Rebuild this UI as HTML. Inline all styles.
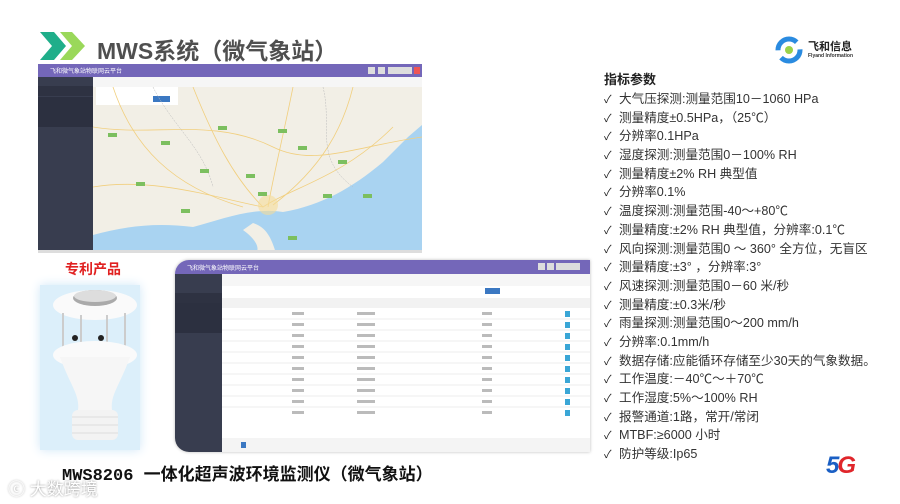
<!DOCTYPE html>
<html><head><meta charset="utf-8">
<style>
*{margin:0;padding:0;box-sizing:border-box}
body{width:900px;height:504px;background:#fff;position:relative;overflow:hidden;font-family:"Liberation Sans","Noto Sans CJK SC",sans-serif}
.abs{position:absolute}
.title{left:97px;top:32px;font-size:23px;font-weight:bold;color:#4f4f4f}
.list{left:604px;top:70px;font-size:12.6px;color:#333}
.list div{height:18.7px;line-height:18.7px;white-space:nowrap}
.list .h{font-weight:bold;color:#222;font-size:13px;height:20px;line-height:20px}
.ck{display:inline-block;width:15px;color:#222;font-size:11px}
.pill{position:absolute;width:9px;height:4px;background:#7cbf5f}
.t{position:absolute;font-size:4px;color:#666}
</style></head><body>
<svg class="abs" style="left:38px;top:30px" width="50" height="32">
<polygon points="2,2 16,2 28,16 16,30 2,30 14,16" fill="#1fae8a"/>
<polygon points="22,2 34,2 47,16 34,30 22,30 34,16" fill="#9ad85a"/>
</svg>
<div class="abs title">MWS系统（微气象站）</div>
<svg class="abs" style="left:775px;top:36px" width="30" height="28">
<circle cx="14" cy="14" r="11" fill="none" stroke="#2a8be0" stroke-width="5" stroke-dasharray="26 8"/>
<circle cx="14" cy="14" r="4" fill="#9bd24a"/>
</svg>
<div class="abs" style="left:808px;top:38px;font-size:11px;font-weight:bold;color:#222">飞和信息</div>
<div class="abs" style="left:808px;top:53px;font-size:5px;font-weight:bold;color:#333">Flyand Information</div>

<div class="abs" style="left:38px;top:64px;width:384px;height:189px;background:#f2efe6;overflow:hidden">
 <div class="abs" style="left:0;top:0;width:384px;height:13px;background:#7467b9"></div>
 <div class="abs" style="left:12px;top:2px;font-size:6px;color:#fff">飞和微气象站物联网云平台</div>
 <div class="abs" style="left:330px;top:3px;width:7px;height:7px;background:#ddd"></div>
 <div class="abs" style="left:340px;top:3px;width:7px;height:7px;background:#ddd"></div>
 <div class="abs" style="left:350px;top:3px;width:24px;height:7px;background:#ddd"></div>
 <div class="abs" style="left:376px;top:3px;width:6px;height:7px;background:#e55"></div>
 <div class="abs" style="left:0;top:13px;width:55px;height:176px;background:#383d4f"></div>
 <div class="abs" style="left:0;top:22px;width:55px;height:10px;background:#2e3242"></div>
 <div class="abs" style="left:0;top:33px;width:55px;height:30px;background:#2c3040"></div>
 <div class="abs" style="left:55px;top:13px;width:329px;height:10px;background:#f6f6f6"></div>
 <div class="abs" style="left:58px;top:23px;width:82px;height:18px;background:#fff"></div>
 <div class="abs" style="left:115px;top:32px;width:17px;height:6px;background:#3b78c2"></div>
 <svg class="abs" style="left:55px;top:23px" width="329" height="166">
  <path d="M0,166 L0,148 C30,140 60,135 100,140 C130,132 160,120 190,125 C230,118 260,100 290,75 L315,50 L329,38 L329,166 Z" fill="#a9d3f1"/>
  <path d="M150,143 C160,150 168,160 163,166 L183,166 C178,150 173,140 160,136Z" fill="#f2efe6"/>
  <g fill="none" stroke="#f1cf7e" stroke-width="0.8">
   <path d="M0,40 C60,50 120,30 180,60 C220,80 260,60 329,50"/>
   <path d="M20,0 C40,60 80,100 150,120"/>
   <path d="M100,0 C120,50 140,90 170,120 C200,100 250,90 300,40"/>
   <path d="M0,100 C60,90 120,110 170,120"/>
   <path d="M200,0 C190,50 180,90 175,120"/>
   <path d="M260,0 C250,40 230,80 180,118"/>
  </g>
  <g fill="none" stroke="#bbb" stroke-width="0.5" stroke-dasharray="2 1">
   <path d="M60,0 C80,40 110,60 120,100"/><path d="M230,0 C240,40 220,70 260,100"/>
  </g>
  <circle cx="175" cy="118" r="10" fill="#f5dc9a" opacity="0.6"/>
 </svg>
 <div class="pill" style="left:70px;top:69px"></div><div class="pill" style="left:123px;top:77px"></div>
 <div class="pill" style="left:162px;top:105px"></div><div class="pill" style="left:208px;top:110px"></div>
 <div class="pill" style="left:260px;top:82px"></div><div class="pill" style="left:300px;top:96px"></div>
 <div class="pill" style="left:98px;top:118px"></div><div class="pill" style="left:143px;top:145px"></div>
 <div class="pill" style="left:220px;top:128px"></div><div class="pill" style="left:240px;top:65px"></div>
 <div class="pill" style="left:325px;top:130px"></div><div class="pill" style="left:250px;top:172px"></div>
 <div class="pill" style="left:180px;top:62px"></div><div class="pill" style="left:285px;top:130px"></div>
 <div class="abs" style="left:0;top:186px;width:384px;height:3px;background:#ddd"></div>
</div>

<div class="abs" style="left:65px;top:259px;font-size:14px;font-weight:bold;color:#e02020">专利产品</div>
<div class="abs" style="left:40px;top:285px;width:100px;height:165px;background:#dceffa;box-shadow:0 0 10px #cfe6f7"></div>
<svg class="abs" style="left:40px;top:285px" width="100" height="165">
 <ellipse cx="55" cy="20" rx="42" ry="15" fill="#fafafa"/>
 <ellipse cx="55" cy="13" rx="22" ry="8" fill="#aaa"/>
 <ellipse cx="55" cy="11" rx="21" ry="6" fill="#ddd"/>
 <rect x="22" y="28" width="2" height="38" fill="#ccc"/><rect x="84" y="28" width="2" height="38" fill="#ccc"/>
 <rect x="40" y="30" width="2" height="34" fill="#ccc"/><rect x="66" y="30" width="2" height="34" fill="#ccc"/>
 <ellipse cx="55" cy="70" rx="42" ry="14" fill="#fafafa"/>
 <path d="M20,72 C30,100 40,110 38,125 L72,125 C70,110 80,100 90,72Z" fill="#f6f6f6"/>
 <rect x="32" y="125" width="46" height="30" rx="6" fill="#f3f3f3"/>
 <g stroke="#ddd"><line x1="32" y1="132" x2="78" y2="132"/><line x1="32" y1="140" x2="78" y2="140"/><line x1="32" y1="148" x2="78" y2="148"/></g>
 <circle cx="35" cy="53" r="3" fill="#222"/><circle cx="61" cy="53" r="3" fill="#222"/>
</svg>

<div class="abs" style="left:175px;top:260px;width:415px;height:192px;background:#fff;border-radius:14px 0 0 14px;overflow:hidden;box-shadow:0 0 3px #bbb">
 <div class="abs" style="left:0;top:0;width:415px;height:14px;background:#7467b9"></div>
 <div class="abs" style="left:12px;top:3px;font-size:6px;color:#fff">飞和微气象站物联网云平台</div>
 <div class="abs" style="left:363px;top:3px;width:7px;height:7px;background:#ddd"></div>
 <div class="abs" style="left:372px;top:3px;width:7px;height:7px;background:#ddd"></div>
 <div class="abs" style="left:381px;top:3px;width:24px;height:7px;background:#ddd"></div>
 <div class="abs" style="left:0;top:14px;width:47px;height:178px;background:#383d4f"></div>
 <div class="abs" style="left:0;top:33px;width:47px;height:10px;background:#2e3242"></div>
 <div class="abs" style="left:0;top:43px;width:47px;height:30px;background:#2c3040"></div>
 <div class="abs" style="left:47px;top:14px;width:368px;height:12px;background:#f6f6f6"></div>
 <div class="abs" style="left:310px;top:28px;width:15px;height:6px;background:#3b78c2"></div>
 <div class="abs" style="left:47px;top:38px;width:368px;height:10px;background:#f2f2f2"></div>
 <svg class="abs" style="left:47px;top:48px" width="368" height="112">
  <g stroke="#ececec">
   <line x1="0" y1="11" x2="368" y2="11"/><line x1="0" y1="22" x2="368" y2="22"/><line x1="0" y1="33" x2="368" y2="33"/>
   <line x1="0" y1="44" x2="368" y2="44"/><line x1="0" y1="55" x2="368" y2="55"/><line x1="0" y1="66" x2="368" y2="66"/>
   <line x1="0" y1="77" x2="368" y2="77"/><line x1="0" y1="88" x2="368" y2="88"/><line x1="0" y1="99" x2="368" y2="99"/>
  </g>
  <g fill="#bbb">
   <rect x="70" y="4" width="12" height="3"/><rect x="70" y="15" width="12" height="3"/><rect x="70" y="26" width="12" height="3"/><rect x="70" y="37" width="12" height="3"/><rect x="70" y="48" width="12" height="3"/><rect x="70" y="59" width="12" height="3"/><rect x="70" y="70" width="12" height="3"/><rect x="70" y="81" width="12" height="3"/><rect x="70" y="92" width="12" height="3"/><rect x="70" y="103" width="12" height="3"/>
   <rect x="135" y="4" width="18" height="3"/><rect x="135" y="15" width="18" height="3"/><rect x="135" y="26" width="18" height="3"/><rect x="135" y="37" width="18" height="3"/><rect x="135" y="48" width="18" height="3"/><rect x="135" y="59" width="18" height="3"/><rect x="135" y="70" width="18" height="3"/><rect x="135" y="81" width="18" height="3"/><rect x="135" y="92" width="18" height="3"/><rect x="135" y="103" width="18" height="3"/>
   <rect x="260" y="4" width="10" height="3"/><rect x="260" y="15" width="10" height="3"/><rect x="260" y="26" width="10" height="3"/><rect x="260" y="37" width="10" height="3"/><rect x="260" y="48" width="10" height="3"/><rect x="260" y="59" width="10" height="3"/><rect x="260" y="70" width="10" height="3"/><rect x="260" y="81" width="10" height="3"/><rect x="260" y="92" width="10" height="3"/><rect x="260" y="103" width="10" height="3"/>
  </g>
  <g fill="#3aa6d6">
   <rect x="343" y="3" width="5" height="6"/><rect x="343" y="14" width="5" height="6"/><rect x="343" y="25" width="5" height="6"/>
   <rect x="343" y="36" width="5" height="6"/><rect x="343" y="47" width="5" height="6"/><rect x="343" y="58" width="5" height="6"/>
   <rect x="343" y="69" width="5" height="6"/><rect x="343" y="80" width="5" height="6"/><rect x="343" y="91" width="5" height="6"/>
   <rect x="343" y="102" width="5" height="6"/>
  </g>
 </svg>
 <div class="abs" style="left:47px;top:178px;width:368px;height:14px;background:#f4f4f4"></div>
 <div class="abs" style="left:66px;top:182px;width:5px;height:6px;background:#3b78c2"></div>
</div>

<div class="abs" style="left:62px;top:460px;font-size:17px;font-weight:bold;color:#111;font-family:'Liberation Mono','Noto Sans CJK SC',monospace">MWS8206 一体化超声波环境监测仪（微气象站）</div>
<div class="abs" style="left:8px;top:475px;font-size:17px;color:#fff;text-shadow:0 0 2px #888">ⓒ 大数跨境</div>

<div class="abs list">
<div class="h">指标参数</div>
<div><span class="ck">✓</span>大气压探测:测量范围10－1060 HPa</div>
<div><span class="ck">✓</span>测量精度±0.5HPa，（25℃）</div>
<div><span class="ck">✓</span>分辨率0.1HPa</div>
<div><span class="ck">✓</span>湿度探测:测量范围0－100% RH</div>
<div><span class="ck">✓</span>测量精度±2% RH 典型值</div>
<div><span class="ck">✓</span>分辨率0.1%</div>
<div><span class="ck">✓</span>温度探测:测量范围-40～+80℃</div>
<div><span class="ck">✓</span>测量精度:±2% RH 典型值，分辨率:0.1℃</div>
<div><span class="ck">✓</span>风向探测:测量范围0 ～ 360° 全方位，无盲区</div>
<div><span class="ck">✓</span>测量精度:±3° ，分辨率:3°</div>
<div><span class="ck">✓</span>风速探测:测量范围0－60 米/秒</div>
<div><span class="ck">✓</span>测量精度:±0.3米/秒</div>
<div><span class="ck">✓</span>雨量探测:测量范围0～200 mm/h</div>
<div><span class="ck">✓</span>分辨率:0.1mm/h</div>
<div><span class="ck">✓</span>数据存储:应能循环存储至少30天的气象数据。</div>
<div><span class="ck">✓</span>工作温度:－40℃～＋70℃</div>
<div><span class="ck">✓</span>工作湿度:5%～100% RH</div>
<div><span class="ck">✓</span>报警通道:1路，常开/常闭</div>
<div><span class="ck">✓</span>MTBF:≥6000 小时</div>
<div><span class="ck">✓</span>防护等级:Ip65</div>
</div>

<div class="abs" style="left:826px;top:452px;font-size:24px;font-weight:bold;font-style:italic;letter-spacing:-2px"><span style="color:#1a5fc4">5</span><span style="color:#e0262b">G</span></div>
</body></html>
